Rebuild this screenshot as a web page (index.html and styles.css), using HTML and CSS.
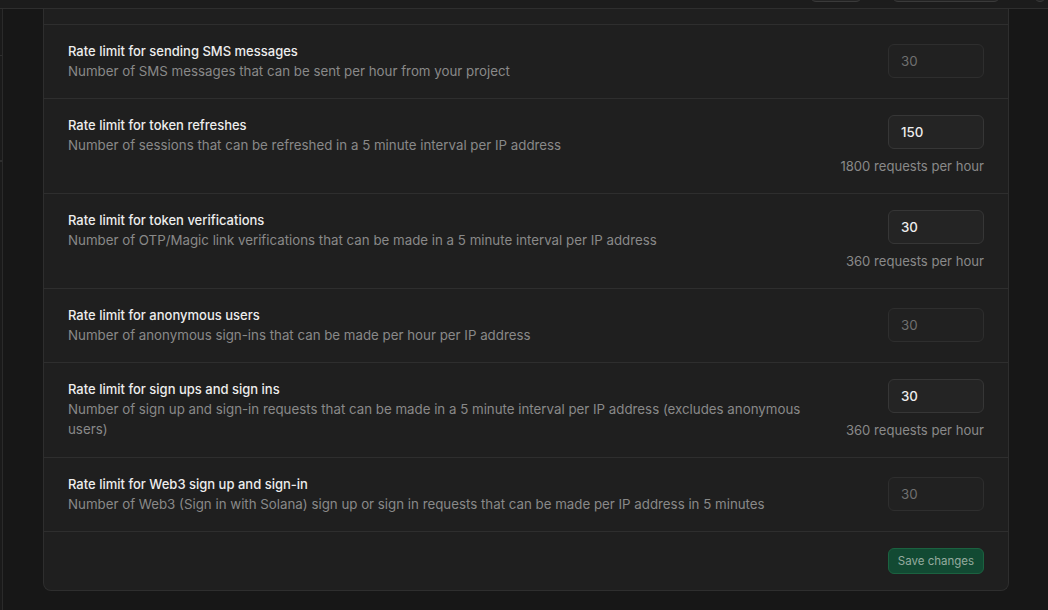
FILE: index.html
```html
<!DOCTYPE html>
<html lang="en">
<head>
<meta charset="utf-8">
<title>Rate limits</title>
<link rel="stylesheet" href="styles.css">
</head>
<body>
<header class="topbar">
  <div class="topbar-spacer"></div>
  <div class="tb-btn tb-btn-sm"></div>
  <div class="tb-btn tb-btn-lg"></div>
  <div class="tb-btn tb-btn-xs"></div>
</header>
<div class="layout">
  <aside class="rail">
    <div class="rail-seg rail-seg-a"></div>
    <div class="rail-seg rail-seg-b"></div>
    <div class="rail-seg"></div>
  </aside>
  <main class="main">
    <section class="card">
      <div class="card-stub"></div>

      <div class="row row-simple">
        <div class="row-text">
          <div class="row-title">Rate limit for sending SMS messages</div>
          <div class="row-desc">Number of SMS messages that can be sent per hour from your project</div>
        </div>
        <div class="row-control">
          <input class="num-input" type="text" value="30" disabled>
        </div>
      </div>

      <div class="row">
        <div class="row-text">
          <div class="row-title">Rate limit for token refreshes</div>
          <div class="row-desc">Number of sessions that can be refreshed in a 5 minute interval per IP address</div>
        </div>
        <div class="row-control">
          <input class="num-input" type="text" value="150">
          <div class="row-help">1800 requests per hour</div>
        </div>
      </div>

      <div class="row">
        <div class="row-text">
          <div class="row-title">Rate limit for token verifications</div>
          <div class="row-desc">Number of OTP/Magic link verifications that can be made in a 5 minute interval per IP address</div>
        </div>
        <div class="row-control">
          <input class="num-input" type="text" value="30">
          <div class="row-help">360 requests per hour</div>
        </div>
      </div>

      <div class="row row-simple">
        <div class="row-text">
          <div class="row-title">Rate limit for anonymous users</div>
          <div class="row-desc">Number of anonymous sign-ins that can be made per hour per IP address</div>
        </div>
        <div class="row-control">
          <input class="num-input" type="text" value="30" disabled>
        </div>
      </div>

      <div class="row">
        <div class="row-text">
          <div class="row-title">Rate limit for sign ups and sign ins</div>
          <div class="row-desc">Number of sign up and sign-in requests that can be made in a 5 minute interval per IP address (excludes anonymous users)</div>
        </div>
        <div class="row-control">
          <input class="num-input" type="text" value="30">
          <div class="row-help">360 requests per hour</div>
        </div>
      </div>

      <div class="row row-simple">
        <div class="row-text">
          <div class="row-title">Rate limit for Web3 sign up and sign-in</div>
          <div class="row-desc">Number of Web3 (Sign in with Solana) sign up or sign in requests that can be made per IP address in 5 minutes</div>
        </div>
        <div class="row-control">
          <input class="num-input" type="text" value="30" disabled>
        </div>
      </div>

      <div class="card-footer">
        <button class="save-btn" type="button" disabled>Save changes</button>
      </div>
    </section>
  </main>
</div>
</body>
</html>
```

FILE: styles.css
```css
* { box-sizing: border-box; }

html, body {
  margin: 0;
  padding: 0;
  width: 1048px;
  height: 610px;
  overflow: hidden;
  background: #171717;
  font-family: Inter, "Liberation Sans", sans-serif;
  -webkit-font-smoothing: antialiased;
}

.topbar {
  height: 9px;
  background: #1c1c1c;
  border-bottom: 1px solid #2e2e2e;
  display: flex;
  align-items: flex-end;
  overflow: hidden;
}

.topbar-spacer { flex: 1; }

.tb-btn {
  height: 26px;
  margin-top: -24px;
  align-self: flex-start;
  border: 1px solid #3a3a3a;
  border-radius: 6px;
  background: #242424;
}
.tb-btn-sm { width: 52px; margin-right: 30px; }
.tb-btn-lg { width: 108px; margin-right: 34px; }
.tb-btn-xs { width: 12px; margin-right: 2px; }

.layout {
  display: flex;
  height: 601px;
}

.rail {
  width: 3px;
  flex-shrink: 0;
  border-right: 1px solid #2a2a2a;
  background: #1a1a1a;
  display: flex;
  flex-direction: column;
}
.rail-seg { border-bottom: 1px solid #2e2e2e; }
.rail-seg-a { height: 47px; }
.rail-seg-b { height: 105px; }

.main {
  flex: 1;
  min-width: 0;
  padding: 0 0 0 40px;
}

.card {
  width: 966px;
  background: #1f1f1f;
  border: 1px solid #2e2e2e;
  border-top: none;
  border-radius: 0 0 8px 8px;
}

.card-stub {
  height: 15px;
}

.row {
  display: flex;
  justify-content: space-between;
  align-items: flex-start;
  gap: 40px;
  padding: 16px 24px 17px 24px;
  border-top: 1px solid #2e2e2e;
}

.row-text {
  flex: 1;
  max-width: 740px;
}

.row-title {
  font-size: 13px;
  line-height: 20px;
  font-weight: 500;
  color: #ededed;
}

.row-desc {
  font-size: 13.3px;
  line-height: 20px;
  color: #898989;
}

.row-control {
  display: flex;
  flex-direction: column;
  align-items: flex-end;
  gap: 7px;
}

.row-simple .row-control {
  padding-top: 3px;
}

.num-input {
  width: 96px;
  height: 34px;
  padding: 0 12px;
  border: 1px solid #363636;
  border-radius: 6px;
  background: #242424;
  color: #ededed;
  font-family: inherit;
  font-size: 13.3px;
  font-weight: 500;
  outline: none;
}

.num-input:disabled {
  background: #212121;
  border-color: #2e2e2e;
  color: #707070;
  font-weight: 400;
}

.row-help {
  font-size: 13.1px;
  line-height: 20px;
  color: #898989;
  text-align: right;
}

.card-footer {
  display: flex;
  justify-content: flex-end;
  padding: 16px 24px;
  border-top: 1px solid #2e2e2e;
}

.save-btn {
  width: 96px;
  height: 26px;
  border-radius: 6px;
  background: #124a33;
  border: 1px solid #1b6240;
  color: #95ab9f;
  font-family: inherit;
  font-size: 11.5px;
  line-height: 16px;
  padding: 0;
  white-space: nowrap;
  cursor: not-allowed;
}
```
